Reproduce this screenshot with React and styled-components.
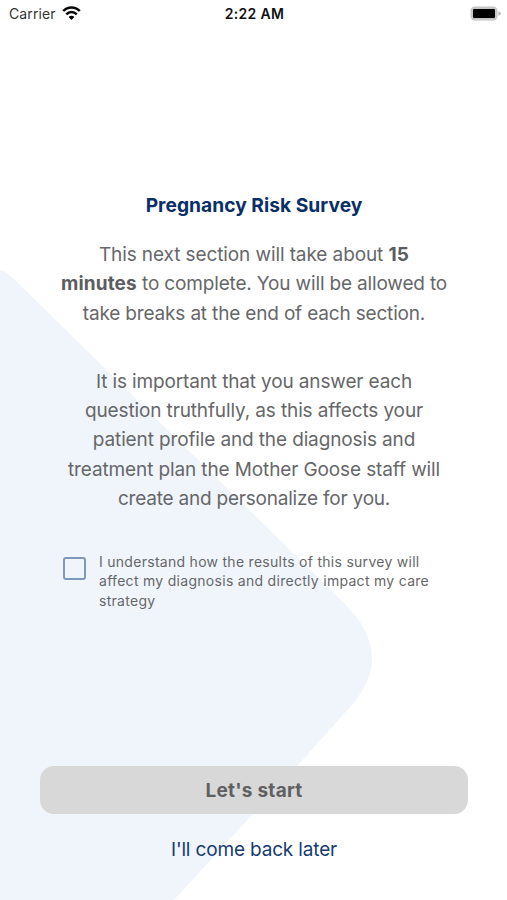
import React from "react";
import styled, { createGlobalStyle } from "styled-components";

const GlobalStyle = createGlobalStyle`
  * { box-sizing: border-box; }
  body { margin: 0; background: #fff; }
  button { font: inherit; border: 0; background: none; padding: 0; cursor: pointer; }
`;

const Screen = styled.main`
  position: relative;
  isolation: isolate;
  width: 507px;
  height: 900px;
  overflow: hidden;
  display: flex;
  flex-direction: column;
  background: #fff;
  color: #666769;
  font-family: Inter, "Liberation Sans", sans-serif;
`;

const Backdrop = styled.svg`
  position: absolute;
  inset: 0;
  z-index: -1;
`;

const StatusBar = styled.header`
  display: grid;
  grid-template-columns: 1fr auto 1fr;
  align-items: center;
  height: 27px;
  padding: 0 6px 0 9px;
  color: #111;
  font-size: 14px;
  line-height: 17px;
`;

const Carrier = styled.div`
  display: flex;
  align-items: center;
  gap: 6px;
  color: #333;
  letter-spacing: 0.12px;
`;

const WifiIcon = styled.svg`
  margin-top: -2px;
`;

const Clock = styled.time`
  font-weight: 600;
  letter-spacing: 0.33px;
  margin-right: 1px;
`;

const Battery = styled.svg`
  justify-self: end;
  margin-top: -1px;
`;

const Title = styled.h1`
  margin: 165px 0 0;
  padding-left: 1px;
  color: #092f66;
  font-size: 19.2px;
  font-weight: 700;
  line-height: 26px;
  letter-spacing: 0.03px;
  text-align: center;
`;

const Paragraph = styled.p`
  margin: ${({ $top }) => $top}px 0 0;
  padding-left: 1px;
  font-size: 19px;
  line-height: 29.3px;
  text-align: center;
`;

const Line = styled.span`
  display: block;
  white-space: nowrap;
  letter-spacing: ${({ $tracking = 0 }) => $tracking}px;
`;

const Strong = styled.strong`
  font-weight: 700;
  color: #5c5d5f;
  letter-spacing: 0.15px;
`;

const Consent = styled.label`
  display: flex;
  gap: 13px;
  margin: 38.5px 0 0 63px;
  font-size: 14px;
  line-height: 19.5px;
`;

const Checkbox = styled.input`
  appearance: none;
  flex: none;
  width: 23px;
  height: 23px;
  margin: 5.4px 0 0;
  border: 2px solid #7d98b8;
  border-radius: 3px;
`;

const Actions = styled.footer`
  margin-top: auto;
  padding: 0 39px 35px 40px;
  display: flex;
  flex-direction: column;
  align-items: center;
  gap: 21px;
`;

const StartButton = styled.button`
  && {
    width: 100%;
    height: 48px;
    border-radius: 14px;
    background: #d8d8d8;
    color: #606060;
    font-size: 19px;
    font-weight: 700;
    letter-spacing: 0.25px;
  }
`;

const LaterButton = styled.button`
  && {
    color: #163b70;
    font-size: 19px;
    line-height: 30px;
    letter-spacing: -0.16px;
  }
`;

export default function App() {
  return (
    <Screen>
      <GlobalStyle />
      <Backdrop width="507" height="900" viewBox="0 0 507 900" aria-hidden="true">
        <path
          d="M0 270 Q6 271 14 279 L345 604 Q372 631 372 659 Q372 681 352 705 L297 766 L174 900 H0 Z"
          fill="#f0f5fc"
        />
      </Backdrop>
      <StatusBar>
        <Carrier>
          Carrier
          <WifiIcon width="19" height="14" viewBox="0 0 19 14" fill="none" stroke="#080808" strokeWidth="2.5">
            <path d="M1.2 5C5.9.2 13.1.2 17.8 5" />
            <path d="M4.3 8.3C7.2 5.2 11.8 5.2 14.7 8.3" />
            <path d="M9.5 14 6.6 11C8.2 9.3 10.8 9.3 12.4 11Z" fill="#080808" stroke="none" />
          </WifiIcon>
        </Carrier>
        <Clock>2:22 AM</Clock>
        <Battery width="31" height="15" viewBox="0 0 31 15">
          <rect x=".5" y=".5" width="27" height="14" rx="4.2" fill="#c6c6c6" />
          <rect x="3" y="3" width="22" height="9" rx="1.2" fill="#000" />
          <path d="M28.3 5.2Q31 6 31 7.5Q31 9 28.3 9.8Z" fill="#bbb" />
        </Battery>
      </StatusBar>
      <Title>Pregnancy Risk Survey</Title>
      <Paragraph $top={22}>
        <Line $tracking={-0.1}>This next section will take about <Strong>15</Strong></Line>
        <Line $tracking={-0.16}><Strong>minutes</Strong> to complete. You will be allowed to</Line>
        <Line $tracking={-0.17}>take breaks at the end of each section.</Line>
      </Paragraph>
      <Paragraph $top={39}>
        <Line $tracking={-0.14}>It is important that you answer each</Line>
        <Line $tracking={-0.13}>question truthfully, as this affects your</Line>
        <Line $tracking={-0.13}>patient profile and the diagnosis and</Line>
        <Line $tracking={-0.12}>treatment plan the Mother Goose staff will</Line>
        <Line $tracking={-0.21}>create and personalize for you.</Line>
      </Paragraph>
      <Consent>
        <Checkbox type="checkbox" />
        <span>
          <Line $tracking={0.28}>I understand how the results of this survey will</Line>
          <Line $tracking={0.29}>affect my diagnosis and directly impact my care</Line>
          <Line $tracking={0.28}>strategy</Line>
        </span>
      </Consent>
      <Actions>
        <StartButton>Let's start</StartButton>
        <LaterButton>I'll come back later</LaterButton>
      </Actions>
    </Screen>
  );
}
